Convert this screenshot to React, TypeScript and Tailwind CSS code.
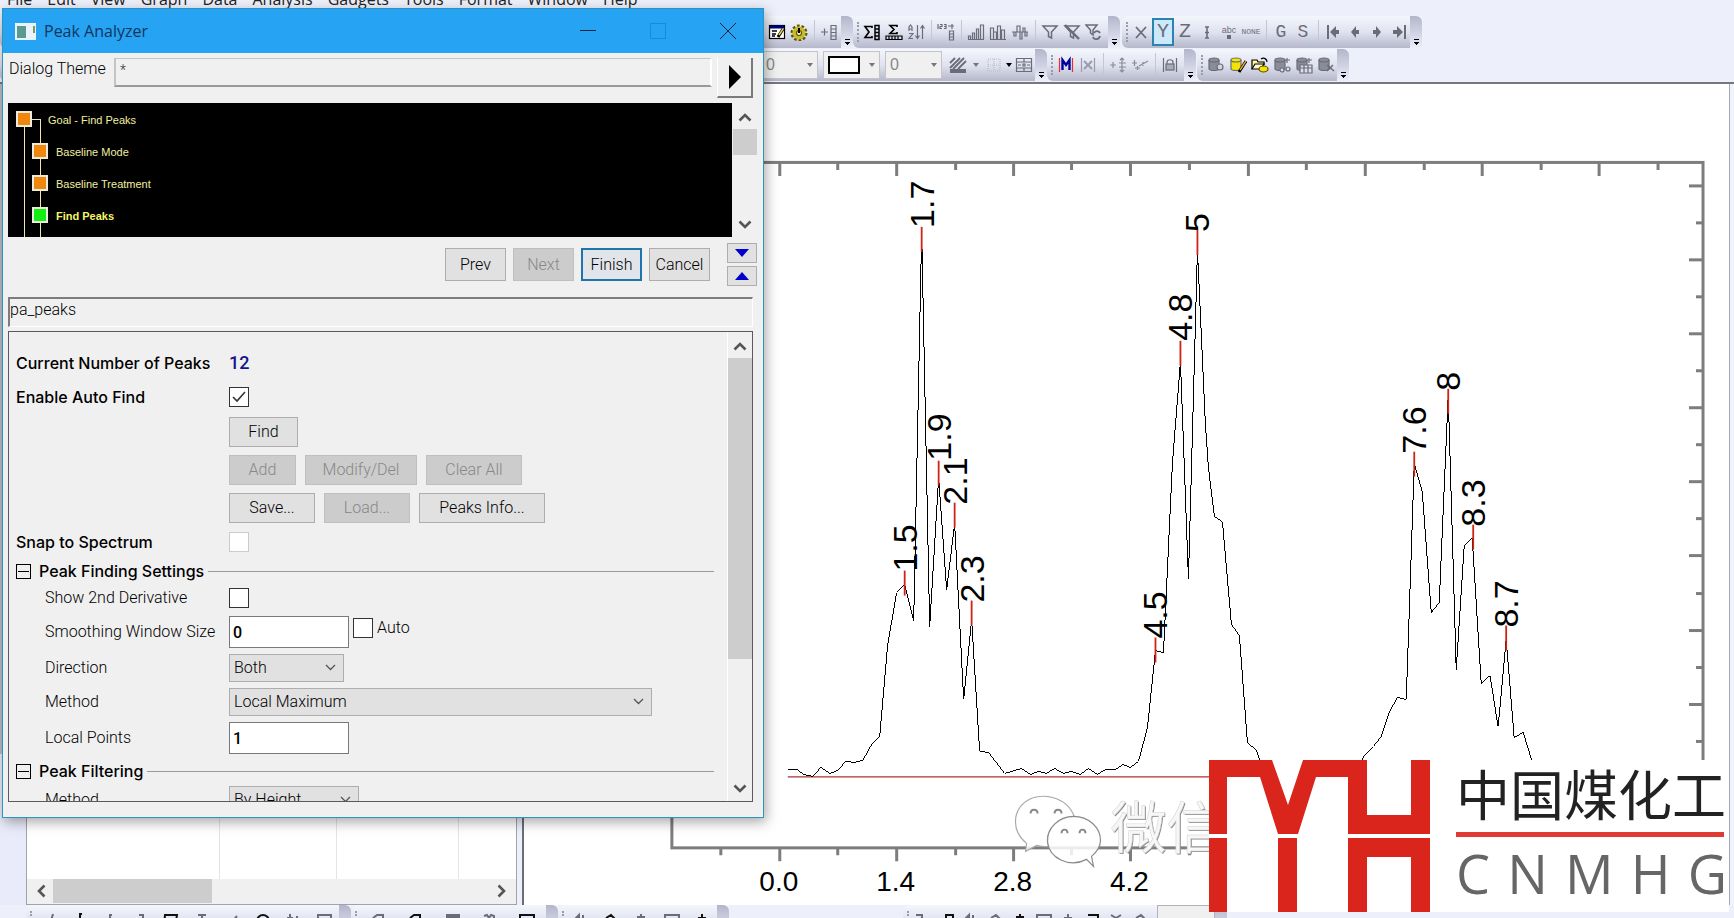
import { useState } from "react";
import type { ReactNode } from "react";

const MENUS = ["File", "Edit", "View", "Graph", "Data", "Analysis", "Gadgets", "Tools", "Format", "Window", "Help"];

const CURVES = [
  "788,770 797,770 804,775 813,777 821,768 830,774 838,771 846,762 855,763 863,761 872,745 880,737 888,645 897,593 905,585 914,621 922,232 930,627 939,478 947,590 955,524 964,700 972,620 980,752 989,753 1005,774 1012,772 1022,769 1031,775 1039,772 1047,774 1055,769 1064,774 1072,772 1081,775 1089,769 1098,775 1106,770 1115,770 1123,765 1131,768 1139,762 1148,728 1156,651 1164,653 1173,463 1181,362 1189,579 1198,250 1206,425 1209,468 1215,517 1223,522 1232,625 1240,636 1248,743 1257,751 1261,762",
  "1363,762 1364,757 1374,747 1382,737 1390,713 1398,698 1407,700 1415,464 1423,492 1432,613 1440,603 1449,395 1457,670 1465,546 1473,538 1482,684 1491,676 1499,727 1507,640 1515,738 1524,733 1533,762",
];

// tick is the top of the red marker; base/start place the rotated label
const PEAKS = [
  { label: "1.5", x: 905, tick: 571, base: 917, start: 572 },
  { label: "1.7", x: 922, tick: 227, base: 934, start: 228 },
  { label: "1.9", x: 939, tick: 461, base: 951, start: 461 },
  { label: "2.1", x: 955, tick: 503, base: 967, start: 505 },
  { label: "2.3", x: 972, tick: 601, base: 984, start: 603 },
  { label: "4.5", x: 1156, tick: 638, base: 1168, start: 639 },
  { label: "4.8", x: 1181, tick: 341, base: 1193, start: 341 },
  { label: "5", x: 1198, tick: 230, base: 1210, start: 232 },
  { label: "7.6", x: 1415, tick: 452, base: 1427, start: 454 },
  { label: "8", x: 1449, tick: 389, base: 1461, start: 391 },
  { label: "8.3", x: 1474, tick: 525, base: 1486, start: 527 },
  { label: "8.7", x: 1507, tick: 626, base: 1519, start: 628 },
];

const X_MAJOR = [780, 897, 1014, 1131, 1249, 1366, 1483, 1600];
const X_MINOR = [721, 838, 956, 1072, 1190, 1307, 1425, 1542, 1659];
const Y_MAJOR = [186, 260, 334, 408, 482, 556, 631, 705];
const Y_MINOR = [223, 297, 371, 445, 519, 594, 668, 742];

const GRAY = "#6b6c78";

function Glyph({ children }: { children: ReactNode }) {
  return (
    <svg width="18" height="18" viewBox="0 0 18 18" fill="none" stroke={GRAY} strokeWidth="1.2">
      {children}
    </svg>
  );
}

function Tool({ name, active, children }: { name: string; active?: boolean; children: ReactNode }) {
  return (
    <button
      type="button"
      aria-label={name}
      className={
        active
          ? "flex h-7 w-[22px] shrink-0 items-center justify-center border-2 border-[#2a84b0] bg-[#cce8fa]"
          : "flex h-7 w-[22px] shrink-0 items-center justify-center"
      }>
      {children}
    </button>
  );
}

function Sep() {
  return (
    <div className="flex w-2 shrink-0 justify-center">
      <div className="h-6 w-px bg-[#c3c6d6]" />
    </div>
  );
}

function Grip() {
  return <div className="mr-0.5 ml-1 h-5 w-0 shrink-0 border-l-2 border-dotted border-[#9a9cae]" />;
}

function Bar({ className = "", children }: { className?: string; children: ReactNode }) {
  return (
    <div className={`flex h-8 shrink-0 items-center rounded-l-md bg-linear-to-b from-[#f4f6fc] via-[#e0e3f0] to-[#b6b8cb] ${className}`}>
      {children}
      <div className="ml-auto flex h-8 w-3 shrink-0 flex-col items-center justify-end rounded-tr-md bg-linear-to-b from-[#b3b5cb] to-[#eceefa] pb-0.5">
        <svg width="7" height="7" viewBox="0 0 7 7" shapeRendering="crispEdges">
          <path d="M1 0h5v1H1zM1 3h5v1H5v1H4v1H3V5H2V4H1z" fill="#000" />
        </svg>
      </div>
    </div>
  );
}

function Database({ color, children }: { color: string; children?: ReactNode }) {
  return (
    <Glyph>
      <path d="M2 4v9c1 2 9 2 10 0V4" fill={color} />
      <ellipse cx="7" cy="4" rx="5" ry="2" fill={color} />
      {children}
    </Glyph>
  );
}

function ComboBox({ width, children }: { width: string; children: ReactNode }) {
  return (
    <button type="button" className={`mr-[5px] flex h-7 shrink-0 items-center justify-between border border-[#c4c4c8] bg-[#f0f0f0] px-1 text-[16px] text-[#888] ${width}`}>
      {children}
      <svg width="6" height="4" viewBox="0 0 6 4"><path d="M0 0h6L3 4z" fill="#777" /></svg>
    </button>
  );
}

function Toolbars() {
  return (
    <div className="flex flex-col gap-px border-b-2 border-[#77787d] pt-[7px] pb-px">
      <div className="flex">
        <Bar className="w-[853px]">
          <div className="w-[766px]" />
          <Tool name="Properties">
            <Glyph>
              <rect x="1.5" y="2.5" width="15" height="13" fill="#fff" stroke="#000" />
              <path d="M2 4h14" stroke="#000080" strokeWidth="3" />
              <path d="M4 8h5M4 11h4M4 13h3" stroke="#000" strokeWidth="1.6" />
              <path d="M15 6l-5 8" stroke="#000" strokeWidth="3" />
              <path d="M15 6l-4 6" stroke="#e8dc40" strokeWidth="1.4" />
            </Glyph>
          </Tool>
          <Tool name="Settings">
            <Glyph>
              <circle cx="9" cy="10" r="7" stroke="#5a5500" strokeWidth="3" strokeDasharray="2.6 1.8" />
              <circle cx="9" cy="10" r="4.5" stroke="#c8ba28" strokeWidth="4" />
              <circle cx="9" cy="10" r="2.5" fill="#f4f2d0" stroke="#5a5500" />
              <path d="M9 5v5" stroke="#000" strokeWidth="2" />
            </Glyph>
          </Tool>
          <Sep />
          <Tool name="Add column">
            <Glyph>
              <path d="M1 9h7M4.500 5.500v7M11 2.500h5v14h-5zM11 6h5M11 9.500h5M11 13h5" />
            </Glyph>
          </Tool>
        </Bar>
        <Bar className="w-[267px]">
          <Grip />
          <Tool name="Column statistics">
            <Glyph>
              <path d="M9 5V3.500H2L6 9l-4 5.500h7V13" stroke="#000" strokeWidth="1.600" />
              <path d="M12 2.500h4v14h-4zM12 6h4M12 9.500h4M12 13h4" stroke="#000" strokeWidth="1.500" />
            </Glyph>
          </Tool>
          <Tool name="Row statistics">
            <Glyph>
              <path d="M12 4V2.500H5L9 6.500l-4 4h7V9" stroke="#000" strokeWidth="1.600" />
              <path d="M1 13h16v3.500H1zM4 13v3M7 13v3M10 13v3M13 13v3" stroke="#000" />
            </Glyph>
          </Tool>
          <Tool name="Sort">
            <Glyph>
              <path d="M2 8V4l1.500-2L5 4v4M2 6h3M2 10.500h4l-4 5h4M10.500 2v13M8.500 12.500l2 3 2-3M15.500 16V3M13.500 5.500l2-3 2 3" />
            </Glyph>
          </Tool>
          <Sep />
          <Tool name="Set column values">
            <Glyph>
              <path d="M1 1v5M3 1.500h2v2H3v2h2M7 1.500h2v4H7M7 3.500h2M11 3h6M15 1v5M12.500 8h4v9h-4zM12.500 11h4M12.500 14h4" />
            </Glyph>
          </Tool>
          <Sep />
          <Tool name="Bars ascending">
            <Glyph><path d="M1.500 16v-3h2v3M5.500 16v-6h2v6M9.500 16V6h2v10M13.500 16V2h3v14M1 16.500h16" /></Glyph>
          </Tool>
          <Tool name="Bars random">
            <Glyph><path d="M1.500 16V5h3v11M4.500 16V9h3v7M8.500 16V3h3v13M12.500 16V7h3v9M1 16.500h16" /></Glyph>
          </Tool>
          <Tool name="Normalize">
            <Glyph><path d="M1 9h16M3 9v4h2V9M6 9V3h3v13h2V9M12 9V5h2v8h2V9" /></Glyph>
          </Tool>
          <Sep />
          <Tool name="Filter">
            <Glyph><path d="M2 3h14l-5.500 6v6l-3 -1.500V9z" strokeWidth="1.500" /></Glyph>
          </Tool>
          <Tool name="Remove filter">
            <Glyph><path d="M2 3h14l-5.500 6v6l-3 -1.500V9z" strokeWidth="1.500" /><path d="M2 2l14 14" strokeWidth="2.400" /></Glyph>
          </Tool>
          <Tool name="Reapply filter">
            <Glyph><path d="M1 2h11L8 7v5L5.500 10V7z" strokeWidth="1.500" /><path d="M8 14c1 3 6 3 7-1M15 10c-1-2-4-3-6 0" strokeWidth="1.800" /></Glyph>
          </Tool>
        </Bar>
        <Bar className="ml-0.5 w-[300px] text-[#6b6c78]">
          <Grip />
          <Tool name="Set as X"><Glyph><path d="M4 4l10 11M14 4L4 15" strokeWidth="1.800" /></Glyph></Tool>
          <Tool name="Set as Y" active><span className="font-['Liberation_Mono',monospace] text-[20px] leading-5">Y</span></Tool>
          <Tool name="Set as Z"><span className="font-['Liberation_Mono',monospace] text-[20px] leading-5">Z</span></Tool>
          <Tool name="Set as error"><Glyph><path d="M9 4v11M7 4h4M7 15h4M7 9.500h4" strokeWidth="1.600" /></Glyph></Tool>
          <Tool name="Set as label">
            <span className="flex flex-col items-center text-[9px] leading-[9px]">abc<span className="size-1 bg-[#6b6c78]" /></span>
          </Tool>
          <Tool name="Disregard"><span className="font-['Liberation_Mono',monospace] text-[8px] leading-[8px]">NONE</span></Tool>
          <Sep />
          <Tool name="Grouping"><span className="font-['Liberation_Mono',monospace] text-[18px]">G</span></Tool>
          <Tool name="Subject"><span className="font-['Liberation_Mono',monospace] text-[18px]">S</span></Tool>
          <Sep />
          <Tool name="Move to first"><Glyph><path d="M4 2v14" strokeWidth="2" /><path d="M6 9l6-6v4h3v4h-3v4z" fill={GRAY} stroke="none" /></Glyph></Tool>
          <Tool name="Move left"><Glyph><path d="M5 9l5-6v4h3v4h-3v4z" fill={GRAY} stroke="none" /></Glyph></Tool>
          <Tool name="Move right"><Glyph><path d="M13 9L8 3v4H5v4h3v4z" fill={GRAY} stroke="none" /></Glyph></Tool>
          <Tool name="Move to last"><Glyph><path d="M15 2v14" strokeWidth="2" /><path d="M13 9L7 3v4H3v4h4v4z" fill={GRAY} stroke="none" /></Glyph></Tool>
        </Bar>
      </div>
      <div className="flex">
        <Bar className="w-[1047px]">
          <div className="w-[761px] shrink-0" />
          <ComboBox width="w-[57px]"><span>0</span></ComboBox>
          <ComboBox width="w-[57px]"><span className="h-[18px] w-8 border-2 border-black bg-white" /></ComboBox>
          <ComboBox width="w-[57px]"><span>0</span></ComboBox>
          <Tool name="Fill pattern">
            <Glyph><path d="M1 7l5-5M1 12L11 2M4 13L15 2M9 13l8-8" strokeWidth="1.800" /><path d="M1 15h16" strokeWidth="4" /></Glyph>
          </Tool>
          <svg className="mx-1 shrink-0" width="6" height="4" viewBox="0 0 6 4"><path d="M0 0h6L3 4z" fill="#777" /></svg>
          <Tool name="Border">
            <Glyph><path d="M3 3h12v12H3zM3 9h12M9 3v12" stroke="#b9bbc9" strokeDasharray="1 1" /></Glyph>
          </Tool>
          <svg className="mx-px shrink-0" width="6" height="4" viewBox="0 0 6 4"><path d="M0 0h6L3 4z" fill="#000" /></svg>
          <Tool name="Merge cells">
            <Glyph><path d="M1.500 2.500h15v13h-15zM1 6h16M1 12h16M9 2v4M9 12v4M3 9h3M12 9h3M8 8h2v2H8z" /></Glyph>
          </Tool>
        </Bar>
        <Bar className="w-[149px]">
          <Grip />
          <Tool name="Mask">
            <Glyph><path d="M2.500 2v14M15.500 2v14" stroke="#e03030" /><path d="M5.500 14V4L9 9l3.500-5v10" stroke="#0000a0" strokeWidth="2.400" /></Glyph>
          </Tool>
          <Tool name="Unmask"><Glyph><path d="M2.500 2v14M15.500 2v14" stroke="#9a9ba8" /><path d="M5 5l8 8M13 5l-8 8" stroke="#9a9ba8" strokeWidth="2" /></Glyph></Tool>
          <Sep />
          <Tool name="Swap mask"><Glyph><path d="M1 9h6M4 6v6M10 7h7M10 11h7M13 2v14M11 4l2-2 2 2M11 14l2 2 2-2" stroke="#8a8b98" /></Glyph></Tool>
          <Tool name="Hide mask"><Glyph><path d="M1 7h5M3.500 4v6M4 12h5M6.500 10v4M8 10l9-5M12 6v4" stroke="#8a8b98" /></Glyph></Tool>
          <Sep />
          <Tool name="Lock mask"><Glyph><path d="M2.500 2v14M15.500 2v14M6 8V6c0-3 6-3 6 0v2" /><rect x="5" y="8" width="8" height="6" fill="#aaabb8" /></Glyph></Tool>
        </Bar>
        <Bar className="ml-px w-[152px]">
          <Grip />
          <Tool name="New database"><Database color="#8b8c99"><circle cx="13" cy="11" r="3" fill="#d0d2e0" /></Database></Tool>
          <Tool name="Edit query"><Database color="#f2e600"><path d="M17 5l-7 11" stroke="#000" strokeWidth="3" /><path d="M17 5l-6 9" stroke="#e8a040" strokeWidth="1.400" /></Database></Tool>
          <Tool name="Open query">
            <Glyph>
              <path d="M1 13V4h5l1 2h6v3" fill="#fff8a0" stroke="#000" />
              <path d="M1 13l3-5h9l-3 5z" fill="#fffcd0" stroke="#000" />
              <ellipse cx="12.500" cy="13" rx="4.500" ry="3" fill="#f2e600" stroke="#5c5200" />
              <path d="M10 3c3-2 6 0 6 3" stroke="#000" />
            </Glyph>
          </Tool>
          <Tool name="Preview query"><Database color="#8b8c99"><path d="M12 4h5M14 2v5" /><circle cx="9" cy="14" r="2" fill="#dde" /><circle cx="15" cy="13" r="2" fill="#dde" /></Database></Tool>
          <Tool name="Import query"><Database color="#8b8c99"><path d="M12 4h5M14 2v5" /><path d="M5 9h12v8H5zM5 12h12M9 9v8M13 9v8" fill="#dde" /></Database></Tool>
          <Tool name="Remove query"><Database color="#8b8c99"><path d="M10 9l7 6M16 9l-6 6" strokeWidth="1.600" /></Database></Tool>
        </Bar>
      </div>
    </div>
  );
}

function Chart() {
  return (
    <svg className="block w-full" viewBox="524 84 1206 820" preserveAspectRatio="xMinYMin meet" fontFamily="'Liberation Sans', Arial, sans-serif">
      <g stroke="#7d7d7d" strokeWidth="3" fill="none">
        <rect x="672" y="162.500" width="1032" height="686" />
        {X_MAJOR.map((x) => <path key={x} d={`M${x} 162v14M${x} 849v13`} />)}
        {X_MINOR.map((x) => <path key={x} d={`M${x} 162v8M${x} 849v7`} />)}
        {Y_MAJOR.map((y) => <path key={y} d={`M1690 ${y}h14`} />)}
        {Y_MINOR.map((y) => <path key={y} d={`M1697 ${y}h7`} />)}
      </g>
      <path d="M788 777.500H1230" stroke="#b03030" strokeWidth="1.300" />
      {CURVES.map((points) => (
        <polyline key={points} points={points} fill="none" stroke="#000" strokeWidth="1" shapeRendering="crispEdges" />
      ))}
      {PEAKS.map((p) => (
        <g key={p.label}>
          <path d={`M${p.x} ${p.tick}v25`} stroke="#cf2317" strokeWidth="1.800" />
          <text transform={`translate(${p.base} ${p.start}) rotate(-90)`} fontSize="34">{p.label}</text>
        </g>
      ))}
      {["0.0", "1.4", "2.8", "4.2"].map((label, i) => (
        <text key={label} x={X_MAJOR[i] - 1} y="892" fontSize="28" textAnchor="middle">{label}</text>
      ))}
      <g fill="#fff" fillOpacity="0.85" stroke="#a9a9a9" strokeWidth="1.200">
        <path d="M1027 844c-15-12-14-31-2-41 15-12 43-6 50 15c-18 0-31 14-26 29c-4 1-8 0-12-1l-11 6z" />
        <path d="M1087 860c-17 9-37-1-39-17c-1-14 11-26 26-26s27 11 27 24c0 7-4 12-9 16l2 10z" stroke="#8a8a8a" />
        <path d="M1031 814c0-5 7-5 7 0M1055 814c0-5 7-5 7 0M1062 834c0-5 6-5 6 0M1080 834c0-5 6-5 6 0" fill="none" stroke="#888" strokeWidth="2" />
      </g>
      <g fontSize="56" fontFamily="'Noto Sans CJK SC', sans-serif">
        <text x="1112" y="850" fill="#8c8c8c">微信</text>
        <text x="1111" y="849" fill="#f7f7f7" stroke="#d0d0d0" strokeWidth="0.500">微信</text>
      </g>
    </svg>
  );
}

function Logo() {
  return (
    <div className="absolute right-[5px] bottom-[6px] flex h-[152px] w-[520px] bg-white">
      <svg className="shrink-0" width="221" height="152" viewBox="1209 760 221 152" fill="#da251c">
        <path d="M1209 760h63l16 45 15-45h64v55h44v-55h19v74h-82v-57h-32l-18 57h-20l-18-57h-33v57h-18z" />
        <path d="M1209 838h18v74h-18zM1278 838h19v74h-19zM1348 838h82v74h-19v-55h-44v55h-19z" />
      </svg>
      <div className="ml-[26px] flex w-[271px] flex-col">
        <div className="text-[54px] leading-[66px] whitespace-nowrap text-[#222] font-['Noto_Sans_CJK_SC',sans-serif]">中国煤化工</div>
        <div className="mt-[6px] h-[5px] w-[268px] bg-[#e03a34]" />
        <div className="mt-[3px] flex justify-between text-[54px] leading-[66px] text-[#666] font-['Open_Sans','Noto_Sans',sans-serif]">
          {["C", "N", "M", "H", "G"].map((c) => <span key={c}>{c}</span>)}
        </div>
      </div>
    </div>
  );
}

function Arrow({ d }: { d: string }) {
  return (
    <svg width="14" height="14" viewBox="0 0 14 14" fill="none" stroke="#555" strokeWidth="2.600">
      <path d={d} />
    </svg>
  );
}

const UP = "M1.500 9.500L7 4l5.500 5.500";
const DOWN = "M1.500 4.500L7 10l5.500-5.500";

function PushButton({ children, disabled, primary, className = "" }: { children: ReactNode; disabled?: boolean; primary?: boolean; className?: string }) {
  const look = disabled
    ? "border border-[#bfbfbf] bg-[#cccccc] text-[#888]"
    : primary
      ? "border-2 border-[#1f74ad] bg-[#e1e5e9] text-black"
      : "border border-[#adadad] bg-[#e1e1e1] text-black";
  return (
    <button type="button" disabled={disabled} className={`flex shrink-0 items-center justify-center ${look} ${className}`}>
      {children}
    </button>
  );
}

function Check({ id, defaultChecked, faint }: { id: string; defaultChecked?: boolean; faint?: boolean }) {
  return (
    <span className="relative flex size-5 shrink-0">
      <input
        id={id}
        type="checkbox"
        defaultChecked={defaultChecked}
        disabled={faint}
        className={`peer size-5 appearance-none border bg-white ${faint ? "border-[#cccccc]" : "border-[#333]"}`}
      />
      <svg className="pointer-events-none absolute inset-0 hidden peer-checked:block" width="20" height="20" viewBox="0 0 20 20" fill="none" stroke="#333" strokeWidth="1.600">
        <path d="M4 10l4 4 8-9" />
      </svg>
    </span>
  );
}

function Select({ id, options, width }: { id: string; options: string[]; width: string }) {
  return (
    <span className={`relative block h-7 ${width}`}>
      <select id={id} className="h-7 w-full appearance-none border border-[#adadad] bg-[#e1e1e1] pl-1">
        {options.map((o) => <option key={o}>{o}</option>)}
      </select>
      <svg className="pointer-events-none absolute top-[10px] right-2" width="11" height="8" viewBox="0 0 11 8" fill="none" stroke="#555" strokeWidth="1.300">
        <path d="M1 1l4.500 4.500L10 1" />
      </svg>
    </span>
  );
}

function Row({ label, htmlFor, height, sub, children }: { label?: string; htmlFor?: string; height: string; sub?: boolean; children: ReactNode }) {
  return (
    <div className={`flex items-center ${height}`}>
      <div className={`w-[213px] shrink-0 whitespace-nowrap ${sub ? "pl-[29px]" : "font-medium font-['Inter',sans-serif]"}`}>
        {label && <label htmlFor={htmlFor}>{label}</label>}
      </div>
      {children}
    </div>
  );
}

function Section({ title, height }: { title: string; height: string }) {
  return (
    <div className={`mr-[13px] flex items-center ${height}`}>
      <button type="button" aria-label={`Collapse ${title}`} className="flex size-[15px] shrink-0 items-center justify-center border border-black">
        <span className="h-px w-[11px] bg-black" />
      </button>
      <span className="ml-2 shrink-0 font-medium font-['Inter',sans-serif]">{title}</span>
      <span className="ml-1 h-px flex-1 bg-[#9b9b9b]" />
    </div>
  );
}

function TreeNode({ label, child, current }: { label: string; child?: boolean; current?: boolean }) {
  return (
    <li className={`flex h-8 items-center ${child ? "gap-2 pl-6" : "gap-4 pl-2"}`}>
      <span className={`relative z-10 size-4 border-2 border-[#ececdc] ${current ? "bg-[#12f012]" : "bg-[#f0860e]"}`} />
      <span className={`pt-0.5 ${current ? "font-bold text-[#f4f46a]" : ""}`}>{label}</span>
    </li>
  );
}

function PeakAnalyzer() {
  const [theme, setTheme] = useState("*");
  const [windowSize, setWindowSize] = useState("0");
  const [localPoints, setLocalPoints] = useState("1");

  return (
    <section className="absolute top-2 left-0.5 flex h-[810px] w-[762px] flex-col border border-[#2b96bd] bg-[#f0f0f0] text-[16px] leading-5 font-light text-black shadow-[2px_4px_12px_rgba(0,0,0,0.35)] font-['Roboto',sans-serif]">
      <header className="flex h-11 shrink-0 items-center bg-[#26a3f3] pl-3 text-[#12365c]">
        <svg width="21" height="17" viewBox="0 0 21 17">
          <rect width="21" height="17" fill="#e8f4fa" />
          <rect x="2" y="3" width="9" height="12" fill="#5a9a90" />
          <path d="M19 3v7" stroke="#7a9a60" strokeWidth="2" />
        </svg>
        <h1 className="ml-2 text-[16px] font-normal font-['Open_Sans',sans-serif]">Peak Analyzer</h1>
        <div className="ml-auto flex items-center gap-[54px] pr-[27px]">
          <button type="button" aria-label="Minimize"><svg width="16" height="16"><path d="M0 7.500h16" stroke="#123" /></svg></button>
          <button type="button" aria-label="Maximize"><svg width="16" height="16"><rect x="0.500" y="0.500" width="15" height="15" fill="none" stroke="#158be0" /></svg></button>
          <button type="button" aria-label="Close"><svg width="16" height="16"><path d="M0 0l16 16M16 0L0 16" stroke="#123" /></svg></button>
        </div>
      </header>

      <div className="flex items-start pt-[5px] pl-1.5">
        <label htmlFor="theme" className="w-[105px] pt-px">Dialog Theme</label>
        <input
          id="theme"
          value={theme}
          onChange={(e) => setTheme(e.target.value)}
          className="h-[29px] w-[598px] border-2 border-t border-white border-t-[#c4c4c4] border-l-[#c4c4c4] border-b-[#999] bg-[#f0f0f0] px-1 pb-1 text-[14px] text-[#333]"
        />
        <button type="button" aria-label="Theme menu" className="ml-[5px] flex h-10 w-9 items-center justify-center border-r-2 border-b-2 border-l border-[#7a7a7a] border-l-white">
          <svg width="12" height="24" viewBox="0 0 12 24"><path d="M0 0l12 12L0 24z" /></svg>
        </button>
      </div>

      <div className="mt-[5px] mr-1.5 ml-[5px] flex h-[134px] shrink-0">
        <ul className="relative flex-1 overflow-hidden bg-black text-[11px] font-normal text-[#f0f0a0] font-['Liberation_Sans',Arial,sans-serif]">
          <li aria-hidden="true" className="absolute top-4 left-4 h-[120px] w-[17px] border-t border-r border-l border-[#f0e8a8]" />
          <TreeNode label="Goal - Find Peaks" />
          <TreeNode label="Baseline Mode" child />
          <TreeNode label="Baseline Treatment" child />
          <TreeNode label="Find Peaks" child current />
        </ul>
        <div className="ml-px flex w-6 flex-col items-center pt-2 pb-1.5">
          <Arrow d={UP} />
          <div className="mt-1 h-[26px] w-full bg-[#cdcdcd]" />
          <div className="flex-1" />
          <Arrow d={DOWN} />
        </div>
      </div>

      <div className="mr-1.5 flex h-[49px] shrink-0 items-end justify-end gap-[7px]">
        <div className="flex h-[38px] gap-[7px]">
          <PushButton className="h-[33px] w-[61px]">Prev</PushButton>
          <PushButton className="h-[33px] w-[61px]" disabled>Next</PushButton>
          <PushButton className="h-[33px] w-[61px]" primary>Finish</PushButton>
          <PushButton className="h-[33px] w-[61px]">Cancel</PushButton>
        </div>
        <div className="ml-2.5 flex flex-col gap-[3px]">
          <PushButton className="h-5 w-[30px]"><svg width="14" height="8"><path d="M0 0h14L7 8z" fill="#00c" /></svg></PushButton>
          <PushButton className="h-5 w-[30px]"><svg width="14" height="8"><path d="M0 8h14L7 0z" fill="#00c" /></svg></PushButton>
        </div>
      </div>

      <output className="mt-[11px] mr-2.5 ml-[5px] block h-[30px] shrink-0 border-t-2 border-r border-b border-l-2 border-[#7d7d7d] border-r-white border-b-white pt-px">pa_peaks</output>

      <div className="mt-1 mr-2.5 ml-[5px] flex h-[471px] shrink-0 overflow-hidden border border-[#5a5a5a]">
        <form className="flex-1 pt-[13px] pl-[7px]" onSubmit={(e) => e.preventDefault()}>
          <Row label="Current Number of Peaks" height="h-9">
            <output className="text-[18px] font-medium text-[#14148c]">12</output>
          </Row>
          <Row label="Enable Auto Find" htmlFor="auto-find" height="h-8">
            <Check id="auto-find" defaultChecked />
          </Row>
          <Row height="h-[38px]">
            <PushButton className="h-[30px] w-[69px]">Find</PushButton>
          </Row>
          <Row height="h-[38px]">
            <div className="flex gap-[9px]">
              <PushButton className="h-[30px] w-[67px]" disabled>Add</PushButton>
              <PushButton className="h-[30px] w-28" disabled>Modify/Del</PushButton>
              <PushButton className="h-[30px] w-24" disabled>Clear All</PushButton>
            </div>
          </Row>
          <Row height="h-[38px]">
            <div className="flex gap-[9px]">
              <PushButton className="h-[30px] w-[86px]">Save...</PushButton>
              <PushButton className="h-[30px] w-[86px]" disabled>Load...</PushButton>
              <PushButton className="h-[30px] w-[126px]">Peaks Info...</PushButton>
            </div>
          </Row>
          <Row label="Snap to Spectrum" htmlFor="snap" height="h-[30px]">
            <Check id="snap" faint />
          </Row>
          <Section title="Peak Finding Settings" height="h-7" />
          <Row label="Show 2nd Derivative" htmlFor="derivative" height="h-[26px]" sub>
            <Check id="derivative" />
          </Row>
          <Row label="Smoothing Window Size" htmlFor="smoothing" height="h-[42px]" sub>
            <input
              id="smoothing"
              value={windowSize}
              onChange={(e) => setWindowSize(e.target.value)}
              className="mr-1 h-8 w-[120px] border border-[#7a7a7a] bg-white px-[3px] font-medium"
            />
            <div className="flex h-8 items-start gap-1 pt-0.5">
              <Check id="auto" />
              <label htmlFor="auto">Auto</label>
            </div>
          </Row>
          <Row label="Direction" htmlFor="direction" height="h-[30px]" sub>
            <Select id="direction" options={["Both", "Positive", "Negative"]} width="w-[115px]" />
          </Row>
          <Row label="Method" htmlFor="find-method" height="h-[38px]" sub>
            <Select id="find-method" options={["Local Maximum", "Window Search", "1st Derivative"]} width="w-[423px]" />
          </Row>
          <Row label="Local Points" htmlFor="points" height="h-[34px]" sub>
            <input
              id="points"
              value={localPoints}
              onChange={(e) => setLocalPoints(e.target.value)}
              className="h-8 w-[120px] border border-[#7a7a7a] bg-white px-[3px] font-medium"
            />
          </Row>
          <Section title="Peak Filtering" height="h-8" />
          <Row label="Method" htmlFor="filter-method" height="h-[26px]" sub>
            <Select id="filter-method" options={["By Height", "By Number"]} width="w-[130px]" />
          </Row>
        </form>
        <div className="flex w-[25px] shrink-0 flex-col items-center border-l border-white pt-2 pb-1.5">
          <Arrow d={UP} />
          <div className="mt-1 h-[301px] w-full bg-[#cdcdcd]" />
          <div className="flex-1" />
          <Arrow d={DOWN} />
        </div>
      </div>
    </section>
  );
}

function Worksheet() {
  return (
    <div className="flex w-[491px] shrink-0 flex-col border-r border-b border-l border-[#a0a2ad] bg-white">
      <div className="flex flex-1">
        <div className="w-[193px] border-r border-[#e4e4e4]" />
        <div className="w-[117px] border-r border-[#e4e4e4]" />
        <div className="w-[122px] border-r border-[#e4e4e4]" />
      </div>
      <div className="flex h-6 items-center bg-[#f0f0f0] px-2">
        <Arrow d="M9.500 1.500L4 7l5.500 5.500" />
        <div className="ml-1 h-6 w-[159px] bg-[#cdcdcd]" />
        <div className="ml-auto flex"><Arrow d="M4.500 1.500L10 7l-5.500 5.500" /></div>
      </div>
      <div className="h-px bg-[#f0f0f0]" />
    </div>
  );
}

// the draw toolbar runs off the bottom edge of the window
const DRAW_ICONS = [
  "M13 2l-4 14", "M9 2v14M8 2h3", "M9 2v14M8 3h3", "M7 3h4v12", "M3 3h12l-2 12H2z", "M9 2v14M5 3h8",
  "M4 16L14 4", "M3 9a6 6 0 1 1 12 0", "M6 2v12M13 4v12M3 6h6", "M3 3h13v12H3z",
];
const EDIT_ICONS = ["M4 6l4-3h6v12", "M4 6l4-3h6v12", "M3 3h14M3 5h14", "M3 4l3-1 2 3 2-3 3 1v10", "M2 3h14v12H2z"];
const ARRANGE_ICONS = ["M2 3h6v4h7v8", "M2 7h6V3h7v12", "M3 7l4-4v12M11 3v12", "M4 6l5-3 4 4v8", "M5 5h8M9 2v12", "M2 3h14v12H2z", "M9 2v12M5 6h8", "M5 3h10v12"];

function ClippedTools({ icons }: { icons: string[] }) {
  return (
    <>
      {icons.map((d, i) => (
        <Tool key={i} name={`Tool ${i + 1}`}>
          <Glyph><path d={d} strokeWidth="2" stroke={i % 3 === 1 ? "#111" : GRAY} /></Glyph>
        </Tool>
      ))}
    </>
  );
}

function BottomToolbars() {
  return (
    <div className="flex h-[13px] shrink-0 items-start overflow-hidden pl-[26px]">
      <Bar className="w-[325px]"><Grip /><div className="flex flex-1 justify-around"><ClippedTools icons={DRAW_ICONS} /></div></Bar>
      <Bar className="w-[207px]"><Grip /><div className="flex flex-1 justify-around"><ClippedTools icons={EDIT_ICONS} /></div></Bar>
      <Bar className="w-[171px]"><Grip /><div className="flex flex-1 justify-around"><ClippedTools icons={ARRANGE_ICONS.slice(2, 7)} /></div></Bar>
      <Bar className="ml-[174px] w-[324px]">
        <Grip />
        <div className="flex flex-1 justify-around pr-1"><ClippedTools icons={[...ARRANGE_ICONS, "M3 3l5 3 5-3", "M4 6l5-3 4 4v8"]} /></div>
        <div className="h-8 w-[58px] border border-[#b0b2bd] bg-[#f0f0f0]" />
      </Bar>
    </div>
  );
}

export default function App() {
  return (
    <div className="relative flex h-screen w-full flex-col overflow-hidden bg-[#edf0fb] font-['Liberation_Sans',Arial,sans-serif]">
      <nav className="flex h-[9px] shrink-0 items-end gap-[15px] overflow-hidden pl-[7px] text-[16px] leading-5 text-[#222] font-['Open_Sans',sans-serif]">
        {MENUS.map((m) => <a key={m} href={`#${m}`}>{m}</a>)}
      </nav>
      <Toolbars />
      <main className="flex min-h-0 flex-1">
        <div className="w-[26px] shrink-0 bg-[#e9ebfa]">
          <div className="h-[670px] w-0.5 bg-[#b9bcc8]" />
        </div>
        <Worksheet />
        <div className="ml-[5px] min-w-0 flex-1 overflow-hidden border-r border-l-2 border-[#a5aabb] border-l-[#6d6e75] bg-white">
          <Chart />
        </div>
        <div className="w-1 shrink-0 bg-[#f0f2fc]" />
      </main>
      <BottomToolbars />
      <Logo />
      <PeakAnalyzer />
    </div>
  );
}
